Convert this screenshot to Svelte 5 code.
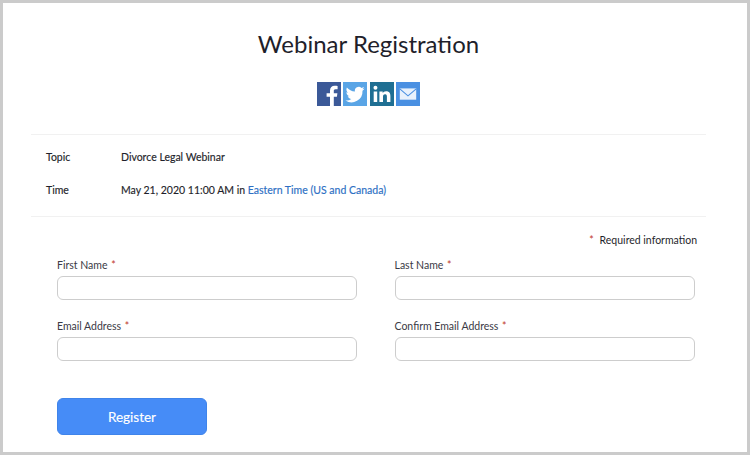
<script lang="ts">
	const info = [
		{ label: 'Topic', value: 'Divorce Legal Webinar' },
		{ label: 'Time', value: 'May 21, 2020 11:00 AM in ', link: 'Eastern Time (US and Canada)' }
	];
	const fields = ['First Name', 'Last Name', 'Email Address', 'Confirm Email Address'];
</script>

<div class="page">
	<h1>Webinar Registration</h1>

	<div class="share">
		<a class="icon fb" href="#fb" aria-label="Facebook">
			<svg viewBox="0 0 24 24" width="24" height="24"><path fill="#fff" d="M16.800 24v-9.200h3.100l.5-3.600h-3.600V9c0-1.100.3-1.800 1.800-1.800h2V3.900c-.4 0-1.600-.2-2.900-.2-2.800 0-4.700 1.600-4.700 4.800v2.700H9.600v3.600H13V24z"/></svg>
		</a>
		<a class="icon tw" href="#tw" aria-label="Twitter">
			<svg viewBox="0 0 24 24" width="24" height="24"><path fill="#fff" d="M21.500 6.600c-.7.300-1.400.5-2.200.6.800-.5 1.400-1.200 1.700-2.100-.7.400-1.600.8-2.500.9a3.900 3.900 0 0 0-6.600 3.500C8.700 9.400 5.800 7.800 3.900 5.500c-1 1.800-.5 4 1.200 5.200-.6 0-1.200-.2-1.700-.5 0 1.900 1.300 3.500 3.100 3.900-.6.200-1.200.2-1.800.1.500 1.500 1.900 2.600 3.600 2.700A7.800 7.800 0 0 1 2.500 18.500a11 11 0 0 0 17-9.800c.8-.5 1.500-1.200 2-2.100z"/></svg>
		</a>
		<a class="icon li" href="#li" aria-label="LinkedIn">
			<svg viewBox="0 0 24 24" width="24" height="24"><path fill="#fff" d="M3.700 9.500h3.500V20H3.700zM5.450 3.700a2 2 0 1 1 0 4 2 2 0 0 1 0-4zM9.400 9.500h3.300V11c.5-.9 1.700-1.800 3.400-1.800 3.500 0 4.300 2.200 4.300 5.100V20h-3.500v-5c0-1.200 0-2.800-1.800-2.800s-2.100 1.300-2.100 2.700V20H9.400z"/></svg>
		</a>
		<a class="icon mail" href="#mail" aria-label="Email">
			<svg viewBox="0 0 24 24" width="24" height="24"><path fill="#e8f1fc" d="M3.800 6.400h16.400v11.300H3.800z"/><path fill="none" stroke="#4a90e2" stroke-width="1.100" d="M3.800 6.900l8.200 7 8.200-7"/></svg>
		</a>
	</div>

	<div class="info">
		{#each info as row}
			<div class="row">
				<span class="label">{row.label}</span>
				<span class="value">{row.value}{#if row.link}<a href="#tz">{row.link}</a>{/if}</span>
			</div>
		{/each}
	</div>

	<form class="form">
		<p class="required"><span class="star">*</span>Required information</p>
		<div class="grid">
			{#each fields as field}
				<label class="field">
					<span class="name">{field} <span class="star-small">*</span></span>
					<input type="text" />
				</label>
			{/each}
		</div>
		<button type="button">Register</button>
	</form>
</div>

<style>
	:global(body) {
		margin: 0;
		background: #fff;
	}

	.page {
		box-sizing: border-box;
		width: 750px;
		height: 455px;
		border: 3px solid #cbcbcb;
		padding: 0 41px 0 28px;
		overflow: hidden;
		font-family: Lato, sans-serif;
		color: #1f1f2b;
	}

	h1 {
		margin: 26px 0 0;
		font-size: 24px;
		line-height: 30px;
		font-weight: 400;
		text-align: center;
	}

	.share {
		display: flex;
		justify-content: center;
		gap: 2.3px;
		margin-top: 23px;
	}

	.icon {
		display: block;
		width: 24px;
		height: 24px;
	}

	.icon svg {
		display: block;
	}

	.fb { background: #3b5998; }
	.tw { background: #5aa5e6; }
	.li { background: #1f6f93; }
	.mail { background: #4a90e2; }

	.info {
		margin-top: 28px;
		padding: 5px 0 10px;
		border-top: 1px solid #f1f1f1;
		border-bottom: 1px solid #f1f1f1;
	}

	.row {
		display: flex;
		height: 33px;
		align-items: center;
		font-size: 10.5px;
		padding-left: 15px;
		-webkit-text-stroke: 0.15px currentColor;
	}

	.label {
		width: 75px;
	}

	.value a {
		color: #2d6fc4;
		text-decoration: none;
	}

	.form {
		padding: 0 10px 0 26px;
	}

	.required {
		margin: 16px -1px 0 0;
		text-align: right;
		font-size: 10.5px;
		line-height: 14px;
	}

	.star {
		color: #c0392b;
		margin-right: 6px;
	}

	.grid {
		display: grid;
		grid-template-columns: 300px 300px;
		column-gap: 37.5px;
		row-gap: 19px;
		margin-top: 11px;
	}

	.field {
		display: flex;
		flex-direction: column;
		gap: 4px;
	}

	.name {
		font-size: 10.5px;
		line-height: 14px;
		color: #3a3a45;
	}

	.star-small {
		color: #c0392b;
		margin-left: 1px;
	}

	input {
		box-sizing: border-box;
		width: 300px;
		height: 24px;
		border: 1.5px solid #cdcdcd;
		border-radius: 6px;
		background: #fff;
		padding: 0 8px;
	}

	button {
		display: block;
		width: 150px;
		height: 37px;
		margin-top: 37px;
		border: 1px solid #3f84ea;
		border-radius: 6px;
		background: #468cf7;
		color: #fff;
		font-family: inherit;
		font-size: 13.5px;
		-webkit-text-stroke: 0.15px currentColor;
	}
</style>
